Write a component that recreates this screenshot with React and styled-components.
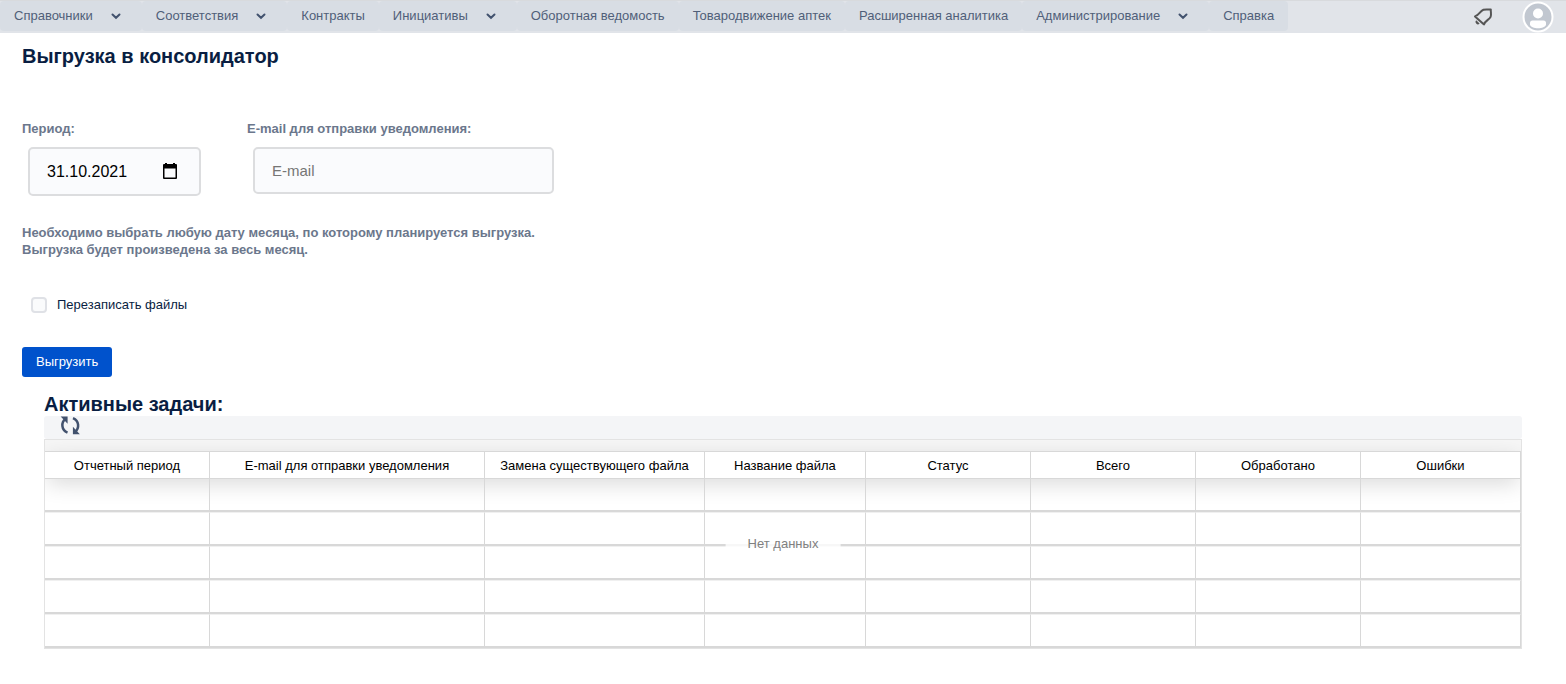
import React from "react";
import styled, { createGlobalStyle } from "styled-components";

const GlobalStyle = createGlobalStyle`
  * {
    box-sizing: border-box;
  }
  body {
    margin: 0;
    background: #fff;
    color: #091e42;
    font-family: "Liberation Sans", Arial, sans-serif;
    font-size: 13px;
    line-height: 16px;
  }
  button,
  input {
    font-family: inherit;
  }
`;

const Header = styled.header`
  display: flex;
  justify-content: space-between;
  height: 33px;
  background: #e1e4e9;
  border-top: 1px solid #d8dadd;
`;

const Nav = styled.nav`
  display: flex;
  height: 30px;
`;

const NavItem = styled.a`
  display: flex;
  align-items: center;
  gap: 18px;
  padding: 0 ${(props) => (props.$menu ? "21px" : "14px")} 0 14px;
  border-radius: 4px;
  background: #d8dde4;
  color: #505f79;
  text-decoration: none;
  white-space: nowrap;
`;

const HeaderActions = styled.div`
  display: flex;
  align-items: center;
  gap: 29px;
  padding-right: 12px;
`;

const IconButton = styled.button`
  display: flex;
  padding: 0;
  border: 0;
  background: none;
  cursor: pointer;
`;

const Page = styled.main`
  padding: 11px 22px;
`;

const Title = styled.h1`
  margin: 0;
  font-size: 20px;
  line-height: 24px;
`;

const Fields = styled.div`
  display: flex;
  gap: 40px;
  margin-top: 53px;
`;

const Field = styled.div`
  display: flex;
  flex-direction: column;
  align-items: flex-start;
`;

const Label = styled.label`
  color: #6b778c;
  font-weight: bold;
`;

const InputBox = styled.div`
  display: flex;
  align-items: center;
  width: ${(props) => props.$width};
  height: ${(props) => props.$height};
  margin: 10px 6px 0;
  padding: 0 21px 0 17px;
  border: 2px solid #dcdddf;
  border-radius: 5px;
  background: #fafbfd;
`;

const Input = styled.input`
  flex: 1;
  min-width: 0;
  padding: 0;
  border: 0;
  outline: 0;
  background: none;
  color: #000;
  font-size: ${(props) => props.$size || "15px"};
  &::placeholder {
    color: #757575;
  }
`;

const Hint = styled.p`
  margin: 28px 0 0;
  color: #6b778c;
  font-weight: bold;
  line-height: 17px;
`;

const CheckLabel = styled.label`
  display: flex;
  align-items: center;
  gap: 10px;
  width: fit-content;
  margin: 39px 0 0 9px;
`;

const Checkbox = styled.input`
  appearance: none;
  width: 16px;
  height: 16px;
  margin: 0;
  border: 2px solid #dfe1e6;
  border-radius: 4px;
  background: #fafbfc;
  &:checked {
    background: #0052cc;
  }
`;

const SubmitButton = styled.button`
  display: block;
  height: 30px;
  margin-top: 34px;
  padding: 0 14px 2px;
  border: 0;
  border-radius: 3px;
  background: #0052cc;
  color: #fff;
  font-size: 13px;
  cursor: pointer;
`;

const Tasks = styled.section`
  margin: 15px 22px 0;
`;

const SubTitle = styled.h2`
  margin: 0;
  font-size: 20px;
  line-height: 24px;
`;

const Toolbar = styled.div`
  display: flex;
  height: 23px;
  padding-left: 16px;
  border-radius: 3px;
  background: #f4f5f7;
`;

const Grid = styled.div`
  position: relative;
  overflow: hidden;
  padding-top: 11px;
  border: 1px solid #e3e3e3;
  background: #f6f6f6;
`;

const Table = styled.table`
  width: 100%;
  table-layout: fixed;
  border-spacing: 0;
  background: #fff;
  color: #000;
  thead {
    box-shadow: 0 6px 22px -2px rgba(0, 0, 0, 0.16);
  }
`;

const HeadCell = styled.th`
  height: 28px;
  padding: 2px 0 0;
  border: solid #d8d8d8;
  border-width: 1px 1px 1px 0;
  background: #fff;
  font-weight: normal;
`;

const Row = styled.tr`
  & + & td {
    border-top: 1px solid #f0f0f0;
  }
`;

const Cell = styled.td`
  box-sizing: content-box;
  height: 31px;
  padding: 0;
  border-right: 1px solid #d8d8d8;
  border-bottom: 2px solid #d8d8d8;
`;

const Empty = styled.div`
  position: absolute;
  top: 104px;
  left: 50%;
  transform: translate(-50%, -50%);
  padding: 0 22px;
  background: rgba(255, 255, 255, 0.8);
  color: #808080;
`;

const menu = [
  { title: "Справочники", dropdown: true },
  { title: "Соответствия", dropdown: true },
  { title: "Контракты" },
  { title: "Инициативы", dropdown: true },
  { title: "Оборотная ведомость" },
  { title: "Товародвижение аптек" },
  { title: "Расширенная аналитика" },
  { title: "Администрирование", dropdown: true },
  { title: "Справка" },
];

const columns = [
  { title: "Отчетный период", width: 165 },
  { title: "E-mail для отправки уведомления", width: 275 },
  { title: "Замена существующего файла", width: 220 },
  { title: "Название файла", width: 161 },
  { title: "Статус", width: 165 },
  { title: "Всего", width: 165 },
  { title: "Обработано", width: 165 },
  { title: "Ошибки", width: 160 },
];

const total = columns.reduce((sum, column) => sum + column.width, 0);
const emptyRows = [1, 2, 3, 4, 5];

const Chevron = () => (
  <svg width="10" height="8" viewBox="0 0 10 8" fill="none">
    <path
      d="M1.5 2.5L5 5.8l3.5-3.3"
      stroke="#42526e"
      strokeWidth="2"
      strokeLinecap="round"
    />
  </svg>
);

const BellIcon = () => (
  <svg width="20" height="18" viewBox="0 0 20 18" fill="none">
    <path
      d="M2 8.4C6 7.2 7 3 10.4 1.8C12.8 1 15 1.6 17.8 1.6C17.6 4 18.6 6.4 17.6 8.8C16.4 11.6 12.2 12.6 11 16.4Z"
      stroke="#555"
      strokeWidth="2"
      strokeLinejoin="round"
    />
    <path d="M3.2 12.2a2.2 2.2 0 0 0 3.4 3.4z" fill="#555" />
  </svg>
);

const Avatar = () => (
  <svg width="32" height="32" viewBox="0 0 32 32">
    <circle cx="16" cy="16" r="15.5" fill="#fff" />
    <circle cx="16" cy="16" r="13.5" fill="#c1c7d0" />
    <circle cx="16" cy="12.5" r="5" fill="#fff" />
    <path
      d="M8 22a2.5 2.5 0 0 1 2.5-2.5h11A2.5 2.5 0 0 1 24 22v1.2c0 2.6-4.5 4-8 4s-8-1.4-8-4z"
      fill="#fff"
    />
  </svg>
);

const CalendarIcon = () => (
  <svg width="16" height="18" viewBox="0 0 16 18">
    <path
      d="M3 0h2v1h6V0h2v1h1a1 1 0 0 1 1 1v13a1 1 0 0 1-1 1H2a1 1 0 0 1-1-1V2a1 1 0 0 1 1-1h1zM2.5 5.5v9h11v-9z"
      fill="#000"
      fillRule="evenodd"
    />
  </svg>
);

const RefreshIcon = () => (
  <svg width="21" height="19" viewBox="0 0 21 19" fill="none" stroke="#42526e">
    <path d="M7.5 16.6C1.3 14 .8 6.4 5.6 2.8" strokeWidth="2.5" />
    <path d="M2.5 1.2h4.3v4.6z" fill="#42526e" strokeWidth="1.6" />
    <path d="M13 2.2c6.2 2.6 6.7 10.2 1.9 13.8" strokeWidth="2.5" />
    <path d="M18 17.4h-4.3v-4.6z" fill="#42526e" strokeWidth="1.6" />
  </svg>
);

function App() {
  return (
    <>
      <GlobalStyle />
      <Header>
        <Nav>
          {menu.map((item) => (
            <NavItem href="#" key={item.title} $menu={item.dropdown}>
              {item.title}
              {item.dropdown && <Chevron />}
            </NavItem>
          ))}
        </Nav>
        <HeaderActions>
          <IconButton aria-label="Уведомления">
            <BellIcon />
          </IconButton>
          <IconButton aria-label="Профиль">
            <Avatar />
          </IconButton>
        </HeaderActions>
      </Header>
      <Page>
        <Title>Выгрузка в консолидатор</Title>
        <Fields>
          <Field>
            <Label htmlFor="period">Период:</Label>
            <InputBox $width="173px" $height="49px">
              <Input id="period" $size="16px" defaultValue="31.10.2021" />
              <IconButton aria-label="Выбрать дату">
                <CalendarIcon />
              </IconButton>
            </InputBox>
          </Field>
          <Field>
            <Label htmlFor="email">E-mail для отправки уведомления:</Label>
            <InputBox $width="301px" $height="47px">
              <Input id="email" type="email" placeholder="E-mail" />
            </InputBox>
          </Field>
        </Fields>
        <Hint>
          Необходимо выбрать любую дату месяца, по которому планируется
          выгрузка.
          <br />
          Выгрузка будет произведена за весь месяц.
        </Hint>
        <CheckLabel>
          <Checkbox type="checkbox" />
          Перезаписать файлы
        </CheckLabel>
        <SubmitButton>Выгрузить</SubmitButton>
        <Tasks>
          <SubTitle>Активные задачи:</SubTitle>
          <Toolbar>
            <IconButton aria-label="Обновить">
              <RefreshIcon />
            </IconButton>
          </Toolbar>
          <Grid>
            <Table>
              <colgroup>
                {columns.map((column) => (
                  <col
                    key={column.title}
                    style={{ width: `${(column.width / total) * 100}%` }}
                  />
                ))}
              </colgroup>
              <thead>
                <tr>
                  {columns.map((column) => (
                    <HeadCell key={column.title}>{column.title}</HeadCell>
                  ))}
                </tr>
              </thead>
              <tbody>
                {emptyRows.map((row) => (
                  <Row key={row}>
                    {columns.map((column) => (
                      <Cell key={column.title} />
                    ))}
                  </Row>
                ))}
              </tbody>
            </Table>
            <Empty>Нет данных</Empty>
          </Grid>
        </Tasks>
      </Page>
    </>
  );
}

export default App;
